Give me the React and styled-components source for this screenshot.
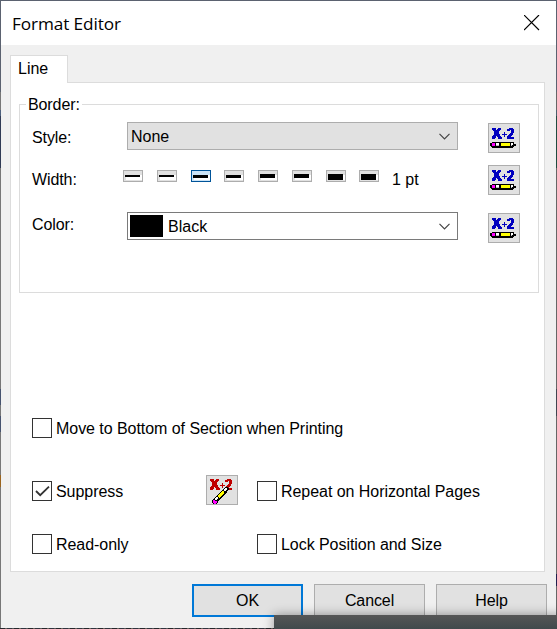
import React from 'react';
import styled, { createGlobalStyle, css } from 'styled-components';

const Global = createGlobalStyle`
  * { box-sizing: border-box; }
  body { margin: 0; overflow: hidden; font: 16px/20px "Liberation Sans", Arial, sans-serif; color: #000; }
  button { font: inherit; color: inherit; padding: 0; margin: 0; }
`;

const Backdrop = styled.main`
  position: relative;
  width: 557px;
  height: 629px;
  padding: 1px;
  overflow: hidden;
  background:
    linear-gradient(#5b6270, #5b6270) 0 0 / 557px 1px no-repeat,
    repeating-linear-gradient(90deg, #25272b 0 5px, #67605a 5px 7px, #30343f 7px 12px, #555 12px 14px) 0 628px / 557px 1px no-repeat,
    linear-gradient(#5b6270 0 92px, #777 92px 110px, #4c5f7c 110px 116px, #303b55 116px 168px, #777 168px 389px, #46536f 389px 405px, #777 405px 416px, #46536f 416px 432px, #777 432px 475px, #9a641e 475px 487px, #777 487px) 0 0 / 1px 629px no-repeat,
    linear-gradient(#5b6270 0 92px, #666 92px 110px, #4c5f6c 110px 116px, #1f4c40 116px 168px, #666 168px 389px, #40444f 389px 416px, #666 416px 574px, #22204e 574px 586px, #666 586px) 556px 0 / 1px 629px no-repeat;
`;

const Dialog = styled.section`
  width: 555px;
  height: 627px;
  background: #f0f0f0;
  display: flex;
  flex-direction: column;
`;

const TitleBar = styled.header`
  height: 44px;
  flex: none;
  background: #fff;
  display: flex;
  align-items: center;
  justify-content: space-between;
  padding: 0 16px 0 11px;
`;

const Title = styled.h1`
  margin: 1px 0 0;
  font: 400 17.2px/24px "Open Sans", "Noto Sans", sans-serif;
  letter-spacing: -0.1px;
  white-space: nowrap;
`;

const CloseButton = styled.button`
  width: 16px;
  height: 16px;
  border: 0;
  background: none;
  display: flex;
`;

const TabStrip = styled.nav`
  height: 37px;
  flex: none;
  padding: 10px 0 0 9px;
`;

const Tab = styled.button`
  position: relative;
  z-index: 1;
  display: block;
  width: 58px;
  height: 28px;
  border: 1px solid #dcdcdc;
  border-bottom: 0;
  background: #fff;
  text-align: left;
  padding: 0 0 2px 7px;
`;

const Panel = styled.div`
  width: 535px;
  height: 490px;
  flex: none;
  margin-left: 9px;
  border: 1px solid #dcdcdc;
  background: #fff;
  padding: 11px 0 0 8px;
`;

const Group = styled.fieldset`
  width: 520px;
  height: 199px;
  margin: 0;
  border: 1px solid #dcdcdc;
  padding: 0 18px 0 12px;
`;

const Legend = styled.legend`
  margin-left: -6px;
  padding: 1px 2px 0;
  height: 20px;
  letter-spacing: -0.1px;
`;

const Field = styled.div`
  display: grid;
  grid-template-columns: ${(p) => p.$label}px 1fr 32px;
  height: 30px;
  margin-top: ${(p) => p.$gap}px;
`;

const Label = styled.span`
  line-height: 20px;
  margin-top: ${(p) => p.$top}px;
  letter-spacing: -0.1px;
`;

const Combo = styled.div`
  width: 331px;
  height: 28px;
  margin-top: -1px;
  display: flex;
  align-items: center;
  border: 1px solid ${(p) => (p.$flat ? '#adadad' : '#7a7a7a')};
  background: ${(p) => (p.$flat ? '#e1e1e1' : '#fff')};
  padding: 0 7px 0 ${(p) => (p.$flat ? 3 : 2)}px;
  svg { margin-left: auto; }
`;

const ComboText = styled.span`
  padding-top: 2px;
`;

const Swatch = styled.span`
  width: 33px;
  height: 22px;
  background: #000;
  margin-right: 5px;
`;

const IconButton = styled.button`
  width: 32px;
  height: 30px;
  border: 1px solid #adadad;
  background: #e1e1e1;
  display: flex;
`;

const Widths = styled.div`
  display: flex;
  align-items: flex-start;
  gap: 13.75px;
  padding-top: 5px;
`;

const WidthValue = styled.span`
  margin-left: -1px;
  white-space: nowrap;
`;

const WidthButton = styled.button`
  width: 20px;
  height: 12px;
  flex: none;
  border: 1px solid ${(p) => (p.$active ? '#005499' : '#adadad')};
  background: ${(p) => (p.$active ? '#cce4f7' : '#e1e1e1')};
  display: flex;
`;

const CheckGrid = styled.div`
  display: grid;
  grid-template-columns: 174px 51px 1fr;
  grid-template-rows: 63px 53px 22px;
  margin: 124px 0 0 13px;
`;

const Option = styled.label`
  display: flex;
  height: 22px;
  align-items: center;
  white-space: nowrap;
  letter-spacing: -0.05px;
  ${(p) => p.$wide && css`grid-column: 1 / -1;`}
  ${(p) => p.$right && css`grid-column: 3;`}
`;

const OptionText = styled.span`
  padding-top: 2px;
`;

const Box = styled.span`
  width: 20px;
  height: 20px;
  border: 1px solid #333;
  background: #fff;
  margin-right: 4px;
  display: flex;
`;

const SuppressFormula = styled.div`
  margin-top: -5px;
`;

const Footer = styled.footer`
  display: flex;
  gap: 11px;
  padding: 12px 0 0 191px;
`;

const Action = styled.button`
  width: 111px;
  height: 33px;
  letter-spacing: -0.1px;
  border: ${(p) => (p.$primary ? '2px solid #0078d7' : '1px solid #adadad')};
  background: #e1e1e1;
`;

const Overlap = styled.div`
  position: absolute;
  left: 274px;
  top: 615px;
  width: 290px;
  height: 20px;
  background: linear-gradient(#565656, #414a4c 14px);
  box-shadow: 0 0 11px rgba(0, 0, 0, 0.38);
`;

const palette = { b: '#0000bf', r: '#c00000', k: '#000', m: '#ff00ff', w: '#fff', y: '#ffff00', g: '#c0c0c0' };

const xPlusTwo = [
  'bbbb..bbb........bbbb..',
  'bbbb.bbbb......bbbbbbb.',
  '.bbbbbbb.......bbb.bbb.',
  '..bbbbb............bbb.',
  '..bbbbb.....b......bbb.',
  '..bbbbb.....b.....bbb..',
  '..bbbbbb..bbbbb..bbbb..',
  '.bbbbbbb....b...bbbb...',
  'bbbb.bbbb...b..bbbb....',
  'bbbb..bbbb.....bbbbbbb.',
  'bbb...bbbb.....bbbbbbb.',
];
const redXPlusTwo = xPlusTwo.map((row) => row.replaceAll('b', 'r'));
const flatPencil = [
  '..kkkkkkkkkkkkkkkkkkkkkk..',
  'kkmmmkwwwkkyyyyyyyyykwwk..',
  'kkmmmkwwwkkyyyyyyyyykwwkkk',
  'kkmmmkgggkkyyyyyyyyykgkkkk',
  '.kkkkkkkkkkkkkkkkkkkkkkk..',
  '..kkkkkkkkkkkkkkkkkkkkk...',
];
const slantedPencil = [
  '.............kkk.',
  '............kwwkk',
  '...........kwwwkk',
  '..........kkwwkk.',
  '.........kyykkk..',
  '........kyyykkk..',
  '.......kyyyykk...',
  '......kyyyykk....',
  '.....kyyyykk.....',
  '....kkyyykk......',
  '...kwwkykk.......',
  '..kwwwkkk........',
  '.kkwwkkk.........',
  'kmmkkkk..........',
  'kmmmmk...........',
  'kmmmmk...........',
  '.kmmk............',
];

function Pixels({ rows, x, y }) {
  return (
    <g transform={`translate(${x} ${y})`}>
      {rows.flatMap((row, j) =>
        [...row].map((c, i) =>
          c === '.' ? null : <rect key={`${j}-${i}`} x={i} y={j} width="1" height="1" fill={palette[c]} />
        )
      )}
    </g>
  );
}

const FormulaButton = () => (
  <IconButton aria-label="Formula">
    <svg width="30" height="28" shapeRendering="crispEdges">
      <Pixels rows={xPlusTwo} x={3} y={4} />
      <Pixels rows={flatPencil} x={1} y={18} />
    </svg>
  </IconButton>
);

const Chevron = () => (
  <svg width="11" height="7" fill="none" stroke="#444" strokeWidth="1.2">
    <path d="M.5 .8 5.5 5.8 10.5 .8" />
  </svg>
);

const strokes = [[4, 2], [4, 2], [4, 3], [4, 3], [3, 4], [3, 4], [3, 6], [3, 6]];

export default function App() {
  return (
    <Backdrop>
      <Global />
      <Dialog>
        <TitleBar>
          <Title>Format Editor</Title>
          <CloseButton aria-label="Close">
            <svg width="16" height="16" stroke="#000" strokeWidth="1.15">
              <path d="M0 0 15 15M15 0 0 15" />
            </svg>
          </CloseButton>
        </TitleBar>
        <TabStrip><Tab>Line</Tab></TabStrip>
        <Panel>
          <Group>
            <Legend>Border:</Legend>
            <Field $label={95} $gap={9}>
              <Label $top={5}>Style:</Label>
              <Combo $flat><ComboText>None</ComboText><Chevron /></Combo>
              <FormulaButton />
            </Field>
            <Field $label={91} $gap={12}>
              <Label $top={5}>Width:</Label>
              <Widths>
                {strokes.map(([y, h], i) => (
                  <WidthButton key={i} $active={i === 2} aria-label={`Width ${i + 1}`}>
                    <svg width="18" height="10" shapeRendering="crispEdges">
                      <path d="M2 4H18V9H2Z" fill="#fff" />
                      <rect x="1" y={y} width="15" height={h} />
                    </svg>
                  </WidthButton>
                ))}
                <WidthValue>1 pt</WidthValue>
              </Widths>
              <FormulaButton />
            </Field>
            <Field $label={95} $gap={18}>
              <Label $top={2}>Color:</Label>
              <Combo><Swatch /><ComboText>Black</ComboText><Chevron /></Combo>
              <FormulaButton />
            </Field>
          </Group>
          <CheckGrid>
            <Option $wide><Box /><OptionText>Move to Bottom of Section when Printing</OptionText></Option>
            <Option>
              <Box>
                <svg width="18" height="18" fill="none" stroke="#333" strokeWidth="1.8"><path d="M3 9 7.2 13.2 16 4.6" /></svg>
              </Box>
              <OptionText>Suppress</OptionText>
            </Option>
            <SuppressFormula>
              <IconButton aria-label="Suppress formula">
                <svg width="30" height="28" shapeRendering="crispEdges">
                  <Pixels rows={redXPlusTwo} x={3} y={3} />
                  <Pixels rows={slantedPencil} x={5} y={11} />
                </svg>
              </IconButton>
            </SuppressFormula>
            <Option $right><Box /><OptionText>Repeat on Horizontal Pages</OptionText></Option>
            <Option><Box /><OptionText>Read-only</OptionText></Option>
            <Option $right><Box /><OptionText>Lock Position and Size</OptionText></Option>
          </CheckGrid>
        </Panel>
        <Footer>
          <Action $primary>OK</Action>
          <Action>Cancel</Action>
          <Action>Help</Action>
        </Footer>
      </Dialog>
      <Overlap />
    </Backdrop>
  );
}
